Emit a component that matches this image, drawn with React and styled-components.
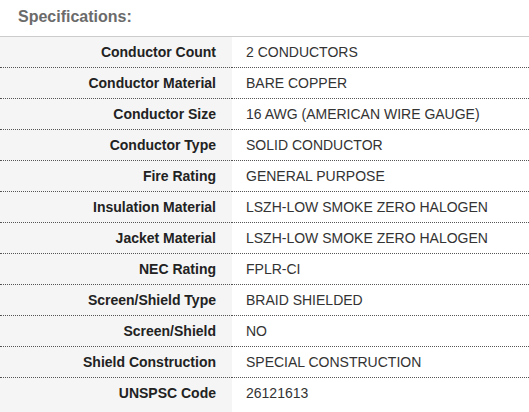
import React from "react";
import styled, { createGlobalStyle } from "styled-components";

const Global = createGlobalStyle`
  html, body { margin: 0; padding: 0; background: #fff; }
  body { font-family: "Liberation Sans", Arial, sans-serif; color: #333; }
`;

const Wrap = styled.section`
  width: 529px;
`;

const Title = styled.h2`
  margin: 0;
  height: 37px;
  box-sizing: border-box;
  padding: 0 0 2px 18px;
  display: flex;
  align-items: center;
  font-size: 16px;
  font-weight: bold;
  color: #6b6b6b;
  border-bottom: 1px solid #cccccc;
`;

const Table = styled.div`
  display: grid;
  grid-template-columns: 232px 1fr;
`;

const Row = styled.div`
  display: contents;
`;

const Cell = styled.div`
  height: ${(p) => (p.$last ? "35px" : "31px")};
  box-sizing: border-box;
  display: flex;
  align-items: ${(p) => (p.$last ? "flex-start" : "center")};
  padding-top: ${(p) => (p.$last ? "7px" : "0")};
  font-size: 14px;
  border-bottom: ${(p) => (p.$last ? "none" : "1px dotted #555")};
`;

const Label = styled(Cell)`
  justify-content: flex-end;
  padding-right: 16px;
  background: #f5f5f5;
  font-weight: bold;
  color: #222;
`;

const Value = styled(Cell)`
  padding-left: 14px;
  color: #333;
`;

const specs = [
  ["Conductor Count", "2 CONDUCTORS"],
  ["Conductor Material", "BARE COPPER"],
  ["Conductor Size", "16 AWG (AMERICAN WIRE GAUGE)"],
  ["Conductor Type", "SOLID CONDUCTOR"],
  ["Fire Rating", "GENERAL PURPOSE"],
  ["Insulation Material", "LSZH-LOW SMOKE ZERO HALOGEN"],
  ["Jacket Material", "LSZH-LOW SMOKE ZERO HALOGEN"],
  ["NEC Rating", "FPLR-CI"],
  ["Screen/Shield Type", "BRAID SHIELDED"],
  ["Screen/Shield", "NO"],
  ["Shield Construction", "SPECIAL CONSTRUCTION"],
  ["UNSPSC Code", "26121613"],
];

export default function App() {
  return (
    <>
      <Global />
      <Wrap>
        <Title>Specifications:</Title>
        <Table>
          {specs.map(([k, v], i) => {
            const last = i === specs.length - 1;
            return (
              <Row key={k}>
                <Label $last={last}>{k}</Label>
                <Value $last={last}>{v}</Value>
              </Row>
            );
          })}
        </Table>
      </Wrap>
    </>
  );
}
